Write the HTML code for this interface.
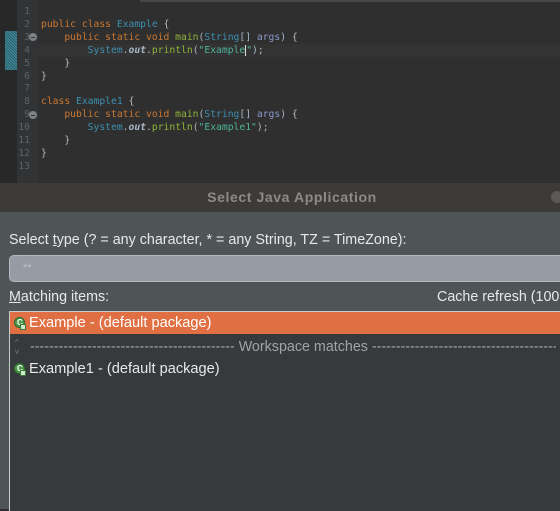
<!DOCTYPE html>
<html><head><style>
*{margin:0;padding:0;box-sizing:border-box}
body{width:560px;height:509px;overflow:hidden;background:#2f2f2f;position:relative;font-family:"Liberation Sans","DejaVu Sans",sans-serif}
.ed{position:absolute;left:0;top:0;width:560px;height:183px;background:#2f2f2f}
.topbar{position:absolute;left:140px;top:0;width:420px;height:2px;background:#474747}
.lg{position:absolute;left:0;top:0;width:17px;height:183px;background:#282828}
.gut{position:absolute;left:17px;top:0;width:21px;height:183px;background:#313335}
.mark{position:absolute;left:5px;top:31px;width:12px;height:39px;background:repeating-linear-gradient(45deg,#3f8a9a 0 1px,#2b5e6a 1px 2px)}
.cur{position:absolute;left:38px;top:44px;width:522px;height:13px;background:#333}
.ln,.code{position:absolute;top:6px;font-family:"DejaVu Sans Mono","Liberation Mono",monospace;font-size:9.7px;line-height:12.9px;white-space:pre}
.ln{left:17px;width:13px;text-align:right;color:#5f6366}
.code{left:41px;color:#a9b7c6}
.k{color:#cc7832}.t{color:#3e8fb0}.m{color:#8fb33a}.s{color:#4fb39a}.p{color:#8b99c9}.o{color:#a9b7c6;font-style:italic;font-weight:bold}.f{color:#bbb}
.fold{position:absolute;left:29px;width:8px;height:8px;border-radius:50%;background:#7d8184}
.fold:after{content:"";position:absolute;left:2px;top:3.5px;width:4px;height:1px;background:#333}
.dlg{position:absolute;left:0;top:183px;width:560px;height:326px;background:#4f5457}
.title{position:absolute;left:0;top:0;width:584px;height:29px;background:#3c3b37;color:#8c8b87;font-weight:bold;font-size:14px;letter-spacing:0.6px;text-align:center;line-height:29px}
.tb{position:absolute;left:551px;top:8px;width:12px;height:12px;border-radius:50%;background:#5a5955}
.lbl{position:absolute;color:#e8e8e8;font-size:14.3px;white-space:nowrap}
.inp{position:absolute;left:9px;top:72px;width:560px;height:27px;background:#959ca3;border-radius:5px;border:1px solid #b4b9be;color:#bfc4c8;font-size:11px;padding:6px 0 0 13px}
.list{position:absolute;left:9px;top:128px;width:560px;height:200px;background:#373a3d;border-left:1px solid #c9cccd;border-top:1px solid #c9cccd}
.row{position:absolute;left:0;width:560px;height:22px;font-size:14.6px;color:#e8e8e8;line-height:22px;padding-left:19px;white-space:nowrap}
.sel{background:#e07043;color:#fff}
.ic{position:absolute;left:4px;top:5px;width:11px;height:11px;border-radius:50%;background:#4e9a4a;border:1px solid #2d6b2a}
.ic:after{content:"C";position:absolute;left:2px;top:-6px;font-size:8px;font-weight:bold;color:#fff}
.ic2{position:absolute;left:10px;top:12px;width:6px;height:6px;background:#cfe8c8;border:1px solid #3a7a3a}
.sep{color:#a0a4a6;font-size:14.3px}
</style></head><body>
<div class="ed">
<div class="topbar"></div>
<div class="lg"></div><div class="gut"></div><div class="mark"></div>
<div class="cur"></div>
<div class="ln">1
2
3
4
5
6
7
8
9
10
11
12
13</div>
<div class="fold" style="top:33px"></div>
<div class="fold" style="top:111px"></div>
<div class="code">
<span class="k">public class </span><span class="t">Example</span> <span class="f">{</span>
    <span class="k">public static void </span><span class="m">main</span>(<span class="t">String</span>[] <span class="p">args</span>) <span class="f">{</span>
        <span class="t">System</span>.<span class="o">out</span>.<span class="m">println</span>(<span class="s">"Example</span><span style="border-left:1px solid #ddd"></span><span class="s">"</span>);
    <span class="f">}</span>
<span class="f">}</span>

<span class="k">class </span><span class="t">Example1</span> <span class="f">{</span>
    <span class="k">public static void </span><span class="m">main</span>(<span class="t">String</span>[] <span class="p">args</span>) <span class="f">{</span>
        <span class="t">System</span>.<span class="o">out</span>.<span class="m">println</span>(<span class="s">"Example1"</span>);
    <span class="f">}</span>
<span class="f">}</span>
</div>
</div>
<div class="dlg">
<div class="title">Select Java Application</div><div class="tb"></div>
<div class="lbl" style="left:9px;top:49px">Select <u>t</u>ype (? = any character, * = any String, TZ = TimeZone):</div>
<div class="inp">**</div>
<div class="lbl" style="left:9px;top:106px"><u>M</u>atching items:</div>
<div class="lbl" style="left:437px;top:106px">Cache refresh (100</div>
<div class="list">
<div class="row sel" style="top:0"><span class="ic"></span><span class="ic2"></span>Example - (default package)</div>
<div class="row" style="top:24px;padding-left:20px;height:22px;line-height:22px;color:#9ea2a4;overflow:hidden;width:546px"><span style="position:absolute;left:5px;top:2px;font-size:8px;color:#6a7a88;line-height:9px">^<br>v</span><span class="sep">------------------------------------------- Workspace matches -------------------------------------------</span></div>
<div class="row" style="top:46px"><span class="ic"></span><span class="ic2"></span>Example1 - (default package)</div>
</div>
</div>
</body></html>
